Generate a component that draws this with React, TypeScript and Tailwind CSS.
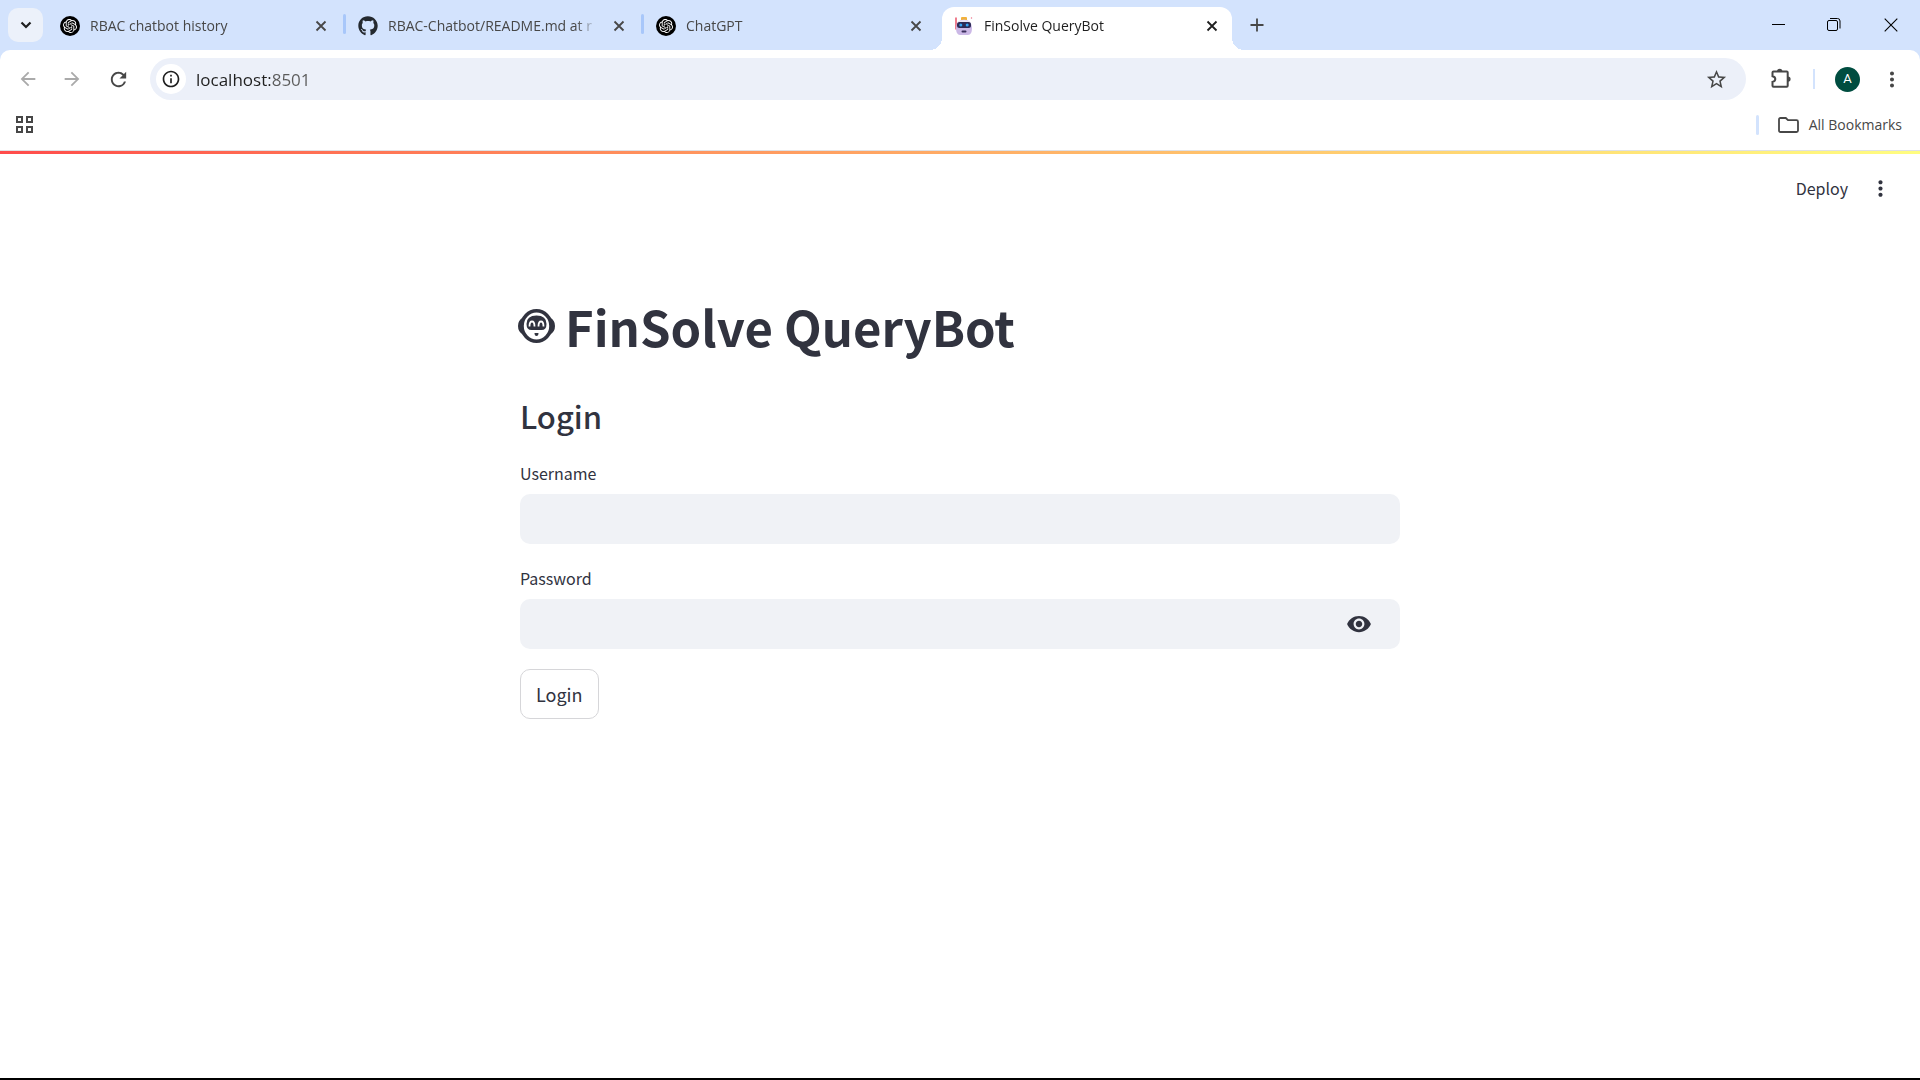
import React, { useState } from "react";
import { SiOpenai } from "react-icons/si";
import { FaGithub } from "react-icons/fa";
import {
  MdArrowBack,
  MdArrowForward,
  MdMoreVert,
  MdRefresh,
  MdStarOutline,
  MdVisibility,
  MdInfoOutline,
} from "react-icons/md";

const CHROME_FONT = "font-['Open_Sans','Noto_Sans',sans-serif]";
const APP_FONT = "font-['Noto_Sans_CJK_SC','Source_Sans_3',sans-serif]";

function OpenAiBadge() {
  return (
    <span className="flex size-5 shrink-0 items-center justify-center rounded-full bg-black text-white">
      <SiOpenai size={14} />
    </span>
  );
}

function BotFavicon() {
  return (
    <svg width="20" height="20" viewBox="0 0 20 20" className="shrink-0" aria-hidden="true">
      <path d="M2 1.5v12" stroke="#e8475f" strokeWidth="1.4" />
      <path d="M17.500 1v2" stroke="#f3a6b4" strokeWidth="1.2" />
      <rect x="7" y="1" width="6" height="4" rx="1" fill="#f2b23c" />
      <path d="M2 12q0-8 8-8.500q8 .5 8 8.500q0 7-4 7H6q-4 0-4-7z" fill="#cbb8e6" />
      <path d="M4 7q0-3 6-3t6 3z" fill="#ece6f7" />
      <rect x="3" y="6" width="14" height="6" rx="2.500" fill="#2c2a55" />
      <circle cx="6.800" cy="9" r="1.500" fill="#35a3f5" />
      <circle cx="13.200" cy="9" r="1.500" fill="#35a3f5" />
      <rect x="7.500" y="14.500" width="5" height="2" rx="1" fill="#3a2f5c" />
    </svg>
  );
}

function CloseIcon() {
  return (
    <svg width="12" height="12" viewBox="0 0 12 12" aria-hidden="true">
      <path d="M1.500 1.500l9 9M10.500 1.500l-9 9" stroke="currentColor" strokeWidth="1.800" />
    </svg>
  );
}

type TabProps = { title: string; icon: React.ReactNode; active?: boolean; divider?: boolean };

function Tab({ title, icon, active, divider }: TabProps) {
  const shape = active
    ? "relative mr-2 rounded-t-xl bg-white pr-2.5 pl-3 text-[#1f1f1f]"
    : divider
      ? "pr-3 pl-3 text-[#474747]"
      : "pr-4 pl-3 text-[#474747]";
  return (
    <div className="flex h-full w-[298px] min-w-0 items-end">
      <div className={`flex h-[43px] min-w-0 flex-1 items-center pb-1.5 ${shape}`}>
        {icon}
        <span className="ml-2.5 min-w-0 flex-1 overflow-hidden mask-r-from-90% text-[14px] leading-5 whitespace-nowrap">
          {title}
        </span>
        <button
          type="button"
          aria-label={`Close ${title}`}
          className="ml-3 flex size-5 shrink-0 items-center justify-center"
        >
          <CloseIcon />
        </button>
        {active && (
          <>
            <span className="absolute bottom-0 -left-3 size-3 bg-[radial-gradient(circle_at_0_0,transparent_12px,#fff_12px)]" />
            <span className="absolute -right-3 bottom-0 size-3 bg-[radial-gradient(circle_at_100%_0,transparent_12px,#fff_12px)]" />
          </>
        )}
      </div>
      {divider && <span className="mb-4 h-5 w-[3px] shrink-0 rounded-full bg-[#a8c7fa]" />}
    </div>
  );
}

function TabStrip() {
  return (
    <div className="flex h-[50px] items-center bg-[#d3e3fd]">
      <button
        type="button"
        aria-label="Search tabs"
        className="ml-2 flex h-[34px] w-[35px] shrink-0 items-center justify-center rounded-[10px] bg-[#ecf1fa] text-[#1f1f1f]"
      >
        <svg width="12" height="8" viewBox="0 0 12 8" aria-hidden="true">
          <path d="M1.500 1.500L6 6l4.500-4.500" fill="none" stroke="currentColor" strokeWidth="2.200" />
        </svg>
      </button>
      <div className="ml-[5px] flex h-full min-w-0">
        <Tab title="RBAC chatbot history" icon={<OpenAiBadge />} divider />
        <Tab
          title="RBAC-Chatbot/README.md at r"
          icon={<FaGithub size={20} className="shrink-0 text-[#24292f]" />}
          divider
        />
        <Tab title="ChatGPT" icon={<OpenAiBadge />} />
        <Tab title="FinSolve QueryBot" icon={<BotFavicon />} active />
      </div>
      <button type="button" aria-label="New tab" className="flex size-[34px] items-center justify-center text-[#474747]">
        <svg width="14" height="14" viewBox="0 0 14 14" aria-hidden="true">
          <path d="M7 .5v13M.5 7h13" stroke="currentColor" strokeWidth="1.800" />
        </svg>
      </button>
      <div className="ml-auto flex h-full text-black">
        <button type="button" aria-label="Minimize" className="flex w-14 items-center justify-center">
          <svg width="13" height="13" viewBox="0 0 13 13" aria-hidden="true">
            <path d="M0 5.500h13" stroke="currentColor" />
          </svg>
        </button>
        <button type="button" aria-label="Restore" className="flex w-14 items-center justify-center">
          <svg width="14" height="14" viewBox="0 0 14 14" fill="none" stroke="currentColor" aria-hidden="true">
            <rect x=".5" y="2.500" width="10" height="10" rx="1.500" />
            <path d="M3 .5h7.500q2.500 0 2.500 2.500v7.500" />
          </svg>
        </button>
        <button type="button" aria-label="Close window" className="flex w-[58px] items-center justify-center">
          <svg width="14" height="14" viewBox="0 0 14 14" aria-hidden="true">
            <path d="M.7 .7l12.600 12.600M13.300 .7L.7 13.300" stroke="currentColor" strokeWidth="1.100" />
          </svg>
        </button>
      </div>
    </div>
  );
}

function Toolbar() {
  return (
    <div className="bg-[#d3e3fd]">
      <div className="flex h-[50px] items-center rounded-t-[10px] bg-white pt-2 text-[#474747]">
        <button type="button" aria-label="Back" className="ml-4 flex size-6 items-center justify-center text-[#aaaaaa]">
          <MdArrowBack size={22} />
        </button>
        <button type="button" aria-label="Forward" className="ml-5 flex size-6 items-center justify-center text-[#aaaaaa]">
          <MdArrowForward size={22} />
        </button>
        <button type="button" aria-label="Reload" className="ml-[22px] flex size-6 items-center justify-center">
          <MdRefresh size={23} />
        </button>
        <div className="ml-5 flex h-[42px] min-w-0 flex-1 items-center rounded-full bg-[#ecf0f9]">
          <button
            type="button"
            aria-label="View site information"
            className="ml-1.5 flex size-[30px] shrink-0 items-center justify-center rounded-full bg-white text-[#1f1f1f]"
          >
            <MdInfoOutline size={20} />
          </button>
          <input
            type="text"
            aria-label="Address"
            defaultValue="localhost:8501"
            className="ml-2.5 h-8 min-w-0 flex-1 bg-[linear-gradient(to_right,#1f1f1f_74px,#5a5a5a_74px)] bg-clip-text text-[17px] text-transparent caret-black outline-none"
          />
          <button type="button" aria-label="Bookmark this tab" className="mr-[18px] flex size-6 items-center justify-center">
            <MdStarOutline size={23} />
          </button>
        </div>
        <button type="button" aria-label="Extensions" className="ml-[23px] flex size-6 items-center justify-center">
          <svg width="22" height="22" viewBox="0 0 22 22" aria-hidden="true">
            <path
              d="M2.500 4.500q0-1 1-1h13.200q1 0 1 1v13.200q0 1-1 1H3.500q-1 0-1-1v-3.800q2.800-.6 2.800-2.800t-2.800-2.800z"
              fill="none"
              stroke="currentColor"
              strokeWidth="2"
            />
            <path d="M7 3.500a2.700 2.700 0 0 1 5.400 0zM18 8.500a2.600 2.600 0 0 1 0 5.200z" fill="currentColor" />
          </svg>
        </button>
        <span className="ml-5 h-5 w-0.5 bg-[#d3e3fd]" />
        <button
          type="button"
          aria-label="Profile"
          className="ml-5 flex size-[25px] items-center justify-center rounded-full bg-[#004d40] font-[Roboto,sans-serif] text-[13px] text-white"
        >
          A
        </button>
        <button type="button" aria-label="Browser menu" className="mr-4 ml-5 flex size-6 items-center justify-center">
          <MdMoreVert size={25} />
        </button>
      </div>
    </div>
  );
}

function BookmarksBar() {
  return (
    <div className="flex h-[51px] items-center border-b border-[#dfe1e5] bg-white text-[#474747]">
      <button type="button" aria-label="Apps" className="ml-4">
        <svg width="18" height="18" viewBox="0 0 18 18" fill="none" stroke="currentColor" strokeWidth="2" aria-hidden="true">
          <rect x="1" y="1" width="5" height="5" />
          <rect x="11" y="1" width="5" height="5" />
          <rect x="1" y="11" width="5" height="5" />
          <rect x="11" y="11" width="5" height="5" />
        </svg>
      </button>
      <span className="ml-auto h-5 w-[3px] rounded-full bg-[#d3e3fd]" />
      <button type="button" className="mr-[18px] ml-[19px] flex items-center gap-2.5">
        <svg width="21" height="16" viewBox="0 0 21 16" fill="none" stroke="currentColor" strokeWidth="1.800" aria-hidden="true">
          <path d="M1 2.500Q1 1 2.500 1h5.300l2.200 2.200h8.500q1.500 0 1.500 1.500v8.800q0 1.500-1.500 1.500h-16Q1 15 1 13.500z" />
        </svg>
        <span className="text-[14px] leading-5">All Bookmarks</span>
      </button>
    </div>
  );
}

function BotMark() {
  return (
    <svg width="37" height="34" viewBox="0 0 37 34" className="-ml-0.5 shrink-0" aria-hidden="true">
      <ellipse cx="18.500" cy="17" rx="14.500" ry="15.200" fill="none" stroke="currentColor" strokeWidth="3.600" />
      <path d="M5 8.500Q0 11 0 17t5 8.500zM32 8.500q5 2.500 5 8.500t-5 8.500z" fill="currentColor" />
      <path d="M8.500 15q0-8.500 10-8.500t10 8.500q0 6-5 6h-10q-5 0-5-6z" fill="currentColor" />
      <path
        d="M11.500 17.500q0-5 2.500-5t2.500 5M20.500 17.500q0-5 2.500-5t2.500 5"
        fill="none"
        stroke="#fff"
        strokeWidth="1.800"
      />
      <path d="M16.500 24h4q0 3-2 3t-2-3z" fill="currentColor" />
    </svg>
  );
}

function LoginForm() {
  const [visible, setVisible] = useState(false);
  return (
    <form className="flex flex-col" onSubmit={(e) => e.preventDefault()}>
      <label htmlFor="username" className="mb-[7px] text-[16px] leading-7">
        Username
      </label>
      <input id="username" type="text" className="h-[50px] rounded-[10px] bg-[#f0f2f6] px-4 text-lg outline-none" />
      <label htmlFor="password" className="mt-5 mb-[7px] text-[16px] leading-7">
        Password
      </label>
      <div className="flex h-[50px] items-center rounded-[10px] bg-[#f0f2f6]">
        <input
          id="password"
          type={visible ? "text" : "password"}
          className="h-full min-w-0 flex-1 bg-transparent px-4 text-lg outline-none"
        />
        <button type="button" aria-label="Show password" onClick={() => setVisible(!visible)} className="mr-7">
          <MdVisibility size={26} />
        </button>
      </div>
      <button
        type="submit"
        className="mt-5 flex h-[50px] items-center self-start rounded-[10px] border border-[#d6d6d9] bg-white px-[15px] text-[18px] leading-8"
      >
        Login
      </button>
    </form>
  );
}

export default function App() {
  return (
    <div className="flex min-h-screen flex-col border-b-2 border-black bg-white">
      <header className={CHROME_FONT}>
        <TabStrip />
        <Toolbar />
        <BookmarksBar />
      </header>
      <div className="h-[3px] bg-linear-to-r from-[#ff4b4b] to-[#fffd80]" />
      <div className={`${APP_FONT} text-[#31333f]`}>
        <div className="flex h-[68px] items-center justify-end">
          <button type="button" className="text-[16px] leading-7">
            Deploy
          </button>
          <button type="button" aria-label="App menu" className="mr-[27px] ml-5">
            <MdMoreVert size={25} />
          </button>
        </div>
        <main className="mx-auto w-full max-w-[880px] pt-[71px]">
          <h1 className="flex items-center gap-2.5 text-[49px] leading-[66px] font-bold">
            <BotMark />
            FinSolve QueryBot
          </h1>
          <h3 className="mt-9 mb-[22px] text-[31px] leading-[42px] font-medium">Login</h3>
          <LoginForm />
        </main>
      </div>
    </div>
  );
}
